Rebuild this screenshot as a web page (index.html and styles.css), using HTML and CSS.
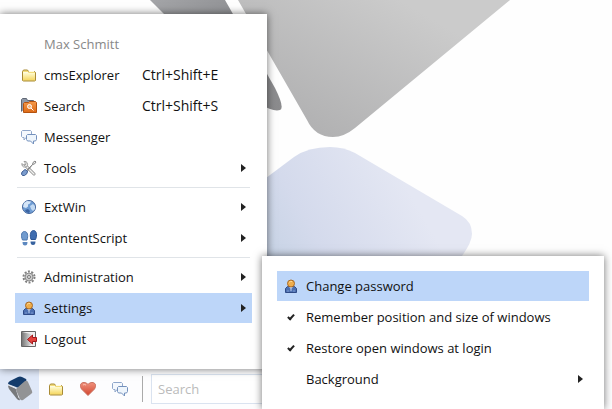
FILE: index.html
```html
<!DOCTYPE html>
<html lang="en">
    <head>
        <meta charset="UTF-8" />
        <meta name="viewport" content="width=device-width, initial-scale=1.0" />
        <title>Desktop</title>
        <link rel="stylesheet" href="styles.css">
    </head>
    <body>
        <!-- Icons that are used more than once -->
        <svg class="defs" aria-hidden="true">
            <defs>
                <linearGradient id="yellow" x1="0" y1="0" x2="0" y2="1">
                    <stop offset="0" stop-color="#fffbd0" />
                    <stop offset="1" stop-color="#f5d865" />
                </linearGradient>
                <linearGradient id="orange" x1="0" y1="0" x2="0" y2="1">
                    <stop offset="0" stop-color="#f59a4c" />
                    <stop offset="1" stop-color="#dd6a16" />
                </linearGradient>
                <linearGradient id="door" x1="0" y1="0" x2="1" y2="0">
                    <stop offset="0" stop-color="#777" />
                    <stop offset="1" stop-color="#ddd" />
                </linearGradient>
                <linearGradient id="red" x1="0" y1="0" x2="0" y2="1">
                    <stop offset="0" stop-color="#f0917c" />
                    <stop offset="1" stop-color="#d2452f" />
                </linearGradient>
            </defs>
            <symbol id="folder" viewBox="0 0 16 16">
                <path d="M1.500 13.500v-9l1-1.500h4l1 1.500h6l1 1v8l-1 .5h-11z" fill="#f3dc7a" stroke="#a98b35" />
                <path d="M2 6h12v7H2z" fill="url(#yellow)" />
                <path d="M2 5.500h5l1-1h5" fill="none" stroke="#fffbe0" />
            </symbol>
            <symbol id="chat" viewBox="0 0 16 16">
                <path d="M1.500 1.500h8l1 1v5l-1 1H5L3 11V8.500H1.500l-1-1v-5z" fill="#f4f8fd" stroke="#8fa6ca" />
                <path d="M6.500 5.500h8l1 1v4l-1 1.500h-2v3l-3-3h-3l-1-1.500v-4z" fill="#eef5fc" stroke="#7491bd" />
            </symbol>
            <symbol id="user" viewBox="0 0 16 16">
                <path d="M2.500 14.500v-4l2-2h7l2 2v4z" fill="#4c6fb0" stroke="#2f4a86" />
                <path d="M5 14v-2M11 14v-2" stroke="#7f9bd0" />
                <path d="M6 8.500h4l-2 3z" fill="#e8eefa" />
                <path d="M7.500 9.500h1l.5 3-1 1-1-1z" fill="#91a9d6" />
                <circle cx="8" cy="5.500" r="3.500" fill="#efad4c" stroke="#a86a26" />
                <path d="M6 4.500q1-1.500 3-1" fill="none" stroke="#ffd890" />
            </symbol>
            <symbol id="arrow" viewBox="0 0 6 8">
                <path d="M1 0v8l5-4z" fill="#222" />
            </symbol>
        </svg>

        <div class="desktop">
            <svg class="wallpaper" width="612" height="409" viewBox="0 0 612 409" aria-hidden="true">
                <defs>
                    <linearGradient id="dark" x1="150" y1="0" x2="280" y2="110" gradientUnits="userSpaceOnUse">
                        <stop offset="0" stop-color="#a4a5a8" />
                        <stop offset=".4" stop-color="#929396" />
                        <stop offset="1" stop-color="#8b8b8d" />
                    </linearGradient>
                    <linearGradient id="grey" x1="400" y1="0" x2="320" y2="137" gradientUnits="userSpaceOnUse">
                        <stop offset="0" stop-color="#cbcbcb" />
                        <stop offset="1" stop-color="#b1b1b2" />
                    </linearGradient>
                    <linearGradient id="blue" x1="250" y1="260" x2="400" y2="175" gradientUnits="userSpaceOnUse">
                        <stop offset="0" stop-color="#c3d1e3" />
                        <stop offset=".4" stop-color="#d4daec" />
                        <stop offset="1" stop-color="#e4e7f3" />
                    </linearGradient>
                </defs>
                <path d="M150 0h75l50 88q10 20 5 22-7 2-20-6L166 16z" fill="url(#dark)" />
                <path d="M238 0l69 120q8 17 26 17 11 0 22-9L510 0z" fill="url(#grey)" />
                <path d="M230 205l64-48q14-10 36-10 14 0 25 6l107 63q10 6 10 18 0 8-10 22l-40 50H230z" fill="url(#blue)" />
            </svg>

            <nav class="menu start-menu" aria-label="Start menu">
                <div class="item user-name"><span class="icon"></span>Max Schmitt</div>
                <button class="item" type="button">
                    <svg class="icon"><use href="#folder" /></svg>
                    <span class="label">cmsExplorer</span><span class="shortcut">Ctrl+Shift+E</span>
                </button>
                <button class="item" type="button">
                    <svg class="icon" viewBox="0 0 16 16">
                        <path d="M.5 13.500v-12l1-1h4l1 2h6v4" fill="#9099a8" stroke="#5f6774" />
                        <path d="M2.500 14.500v-9l1-1h4l1-1h6l1 1v10z" fill="url(#orange)" stroke="#b4520f" />
                        <circle cx="8.500" cy="8.500" r="2" fill="#f3b27c" stroke="#fff" />
                        <path d="M10 10l2.500 2.500" stroke="#fff" />
                    </svg>
                    <span class="label">Search</span><span class="shortcut">Ctrl+Shift+S</span>
                </button>
                <button class="item" type="button">
                    <svg class="icon"><use href="#chat" /></svg>
                    <span class="label">Messenger</span>
                </button>
                <button class="item" type="button">
                    <svg class="icon" viewBox="0 0 16 16">
                        <path d="M4 5l9 9" stroke="#888" stroke-width="3" stroke-linecap="round" />
                        <path d="M4 5l9 9" stroke="#f2f2f0" stroke-width="1.500" stroke-linecap="round" />
                        <path d="M3 1.500l2 2-.5 1.500-1.500.5-2-2c-.5 2 1 4 3 3.500 2 0 3-2 2.500-3.500S4.500 1 3 1.500z" fill="#f4f4f2" stroke="#999" />
                        <path d="M6 10l5.500-5.500.5-2 2-1.500 1 1-1.500 2-2 .5L6.500 11" fill="#eee" stroke="#888" />
                        <path d="M1 12l3-2.500 2.500 1.500-.5 2.500-2.500 2H1.500L.5 14z" fill="#7b9ccd" stroke="#3f5e93" />
                    </svg>
                    <span class="label">Tools</span>
                    <svg class="arrow"><use href="#arrow" /></svg>
                </button>
                <hr />
                <button class="item" type="button">
                    <svg class="icon" viewBox="0 0 16 16">
                        <circle cx="8" cy="8" r="6.500" fill="#6f9dd4" stroke="#44669c" />
                        <path d="M3 4l3-2 4 .5-1 2-2 1v2l-2 1.500-3-1z" fill="#d5e6f8" />
                        <path d="M9 7l3-2 2 2v3l-2 2-2-2z" fill="#c2d9f2" />
                        <path d="M4 11l3-1 2 2-1 2-3-1z" fill="#3b64a3" />
                    </svg>
                    <span class="label">ExtWin</span>
                    <svg class="arrow"><use href="#arrow" /></svg>
                </button>
                <button class="item" type="button">
                    <svg class="icon" viewBox="0 0 16 16">
                        <path d="M1.500 10C-.5 5.500.5 1.500 3.500 1.500s4 4 2.500 8.500z" fill="#719bce" stroke="#4c76ac" />
                        <path d="M1.500 12h5q0 3.500-2.500 3.500T1.500 12z" fill="#5c88c0" />
                        <path d="M10 9.500C8.500 5 9.500.5 12.500.5s4 4.500 2 9z" fill="#3f6db0" stroke="#2c5595" />
                        <path d="M9.500 11.500h5q0 3.500-2.500 3.500t-2.500-3.500z" fill="#37629f" />
                    </svg>
                    <span class="label">ContentScript</span>
                    <svg class="arrow"><use href="#arrow" /></svg>
                </button>
                <hr />
                <button class="item" type="button">
                    <svg class="icon" viewBox="0 0 16 16">
                        <circle cx="8" cy="8" r="5.500" fill="none" stroke="#808080" stroke-width="2" stroke-dasharray="2 1.450" />
                        <circle cx="8" cy="8" r="4" fill="#ccc" stroke="#8a8a8a" />
                        <circle cx="8" cy="8" r="1.500" fill="#eee" stroke="#777" />
                    </svg>
                    <span class="label">Administration</span>
                    <svg class="arrow"><use href="#arrow" /></svg>
                </button>
                <button class="item active" type="button" aria-expanded="true">
                    <svg class="icon"><use href="#user" /></svg>
                    <span class="label">Settings</span>
                    <svg class="arrow"><use href="#arrow" /></svg>
                </button>
                <button class="item" type="button">
                    <svg class="icon" viewBox="0 0 16 16">
                        <path d="M.5.5h14v15H.5z" fill="#eee" stroke="#666" />
                        <path d="M1 1l9 2v11l-3 1H1z" fill="url(#door)" />
                        <path d="M6.500 8.500l5-4.500v2.500h4v4h-4V13z" fill="#e2423c" stroke="#a3161a" />
                    </svg>
                    <span class="label">Logout</span>
                </button>
            </nav>

            <div class="menu sub-menu">
                <button class="item active" type="button">
                    <svg class="icon"><use href="#user" /></svg>
                    <span class="label">Change password</span>
                </button>
                <label class="item">
                    <input class="icon" type="checkbox" name="remember" checked />
                    Remember position and size of windows
                </label>
                <label class="item">
                    <input class="icon" type="checkbox" name="restore" checked />
                    Restore open windows at login
                </label>
                <button class="item" type="button">
                    <span class="icon"></span>
                    <span class="label">Background</span>
                    <svg class="arrow"><use href="#arrow" /></svg>
                </button>
            </div>

            <div class="taskbar">
                <button class="start" type="button" aria-label="Start">
                    <svg width="26" height="26" viewBox="0 0 26 26">
                        <path d="M1 8q0-2 2-3l8-4q2-1 4 0l4 2q1 1 0 2l-7 6q-1 1-3 0z" fill="#143c6c" />
                        <path d="M1 9l8 4 4 11q-1 1-3-1L2 13q-1-2-1-4z" fill="#77797c" />
                        <path d="M1 9l8 3 3 10" fill="none" stroke="#e4e7ec" />
                        <path d="M10 12l8-7q2-1 3 1l4 9q1 2-1 3l-8 6q-2 1-3-1l-4-9q0-1 1-2z" fill="#929395" />
                    </svg>
                </button>
                <div class="quick">
                    <button type="button" aria-label="cmsExplorer"><svg class="icon"><use href="#folder" /></svg></button>
                    <button type="button" aria-label="Favorites">
                        <svg class="icon" viewBox="0 0 16 16">
                            <path d="M8 14.500L1.500 8C-1 4 1 1.500 4 1.500q3 0 4 2 1-2 4-2c3 0 5 2.500 2.500 6.500z" fill="url(#red)" stroke="#c9705f" />
                            <path d="M3 4q1-1 3 0" fill="none" stroke="#fbc3b4" />
                        </svg>
                    </button>
                    <button type="button" aria-label="Messenger"><svg class="icon"><use href="#chat" /></svg></button>
                </div>
                <input class="search" type="text" placeholder="Search" aria-label="Search" />
            </div>
        </div>
    </body>
</html>
```

FILE: styles.css
```css
body {
    margin: 0;
    font-family: "Open Sans", "Noto Sans", sans-serif;
    font-size: 13px;
    color: #111;
}
button,
input {
    font: inherit;
    color: inherit;
}
button {
    padding: 0;
    border: none;
    background: none;
    cursor: pointer;
}
.defs {
    position: absolute;
    width: 0;
    height: 0;
}
.desktop {
    position: relative;
    display: flex;
    flex-direction: column;
    justify-content: flex-end;
    min-height: 100vh;
    overflow: hidden;
    background-color: #fefefe;
}
.wallpaper {
    position: absolute;
    top: 0;
    left: 0;
}
.icon {
    flex: none;
    width: 16px;
    height: 16px;
}

/* Menus */
.menu {
    position: absolute;
    display: flex;
    flex-direction: column;
    gap: 1px;
    box-sizing: border-box;
    padding: 15px;
    background-color: #fff;
    box-shadow: 0 0 8px rgba(0, 0, 0, 0.55);
}
.start-menu {
    left: 0;
    bottom: 40px;
    z-index: 1;
    min-width: 267px;
}
.sub-menu {
    left: 262px;
    bottom: 0;
    z-index: 2;
    min-width: 342px;
}
.item {
    display: flex;
    align-items: center;
    gap: 7px;
    height: 30px;
    padding: 0 6px;
    line-height: 18px;
    text-align: left;
    white-space: nowrap;
}
.item .label {
    min-width: 91px;
}
.item.active {
    background-color: #bdd6f9;
}
.shortcut {
    font-size: 14px;
}
.user-name {
    color: #888;
}
.arrow {
    width: 6px;
    height: 8px;
    margin-left: auto;
}
.menu hr {
    width: 233px;
    height: 1px;
    margin: 3px 2px;
    border: none;
    background-color: #e0e4e8;
}
.item input {
    display: flex;
    align-items: center;
    justify-content: center;
    margin: 0;
    appearance: none;
}
.item input:checked::after {
    content: "";
    width: 2px;
    height: 5px;
    margin-bottom: 2px;
    border: solid #222;
    border-width: 0 2px 2px 0;
    transform: rotate(42deg);
}

/* Taskbar */
.taskbar {
    position: relative;
    display: flex;
    align-items: center;
    height: 40px;
    background-color: #fdfdfe;
}
.start {
    display: flex;
    align-items: center;
    justify-content: center;
    width: 39px;
    height: 40px;
    background-color: #dfe8f8;
}
.quick {
    display: flex;
    align-items: center;
    gap: 16px;
    height: 26px;
    padding: 0 14px 0 9px;
    margin-right: 8px;
    border-right: 1px solid #aaa;
}
.quick button {
    display: flex;
}
.search {
    box-sizing: border-box;
    width: 200px;
    height: 30px;
    padding: 0 6px;
    border: 1px solid #dae3f0;
    background-color: #fff;
}
.search::placeholder {
    color: #bbb;
}
```
